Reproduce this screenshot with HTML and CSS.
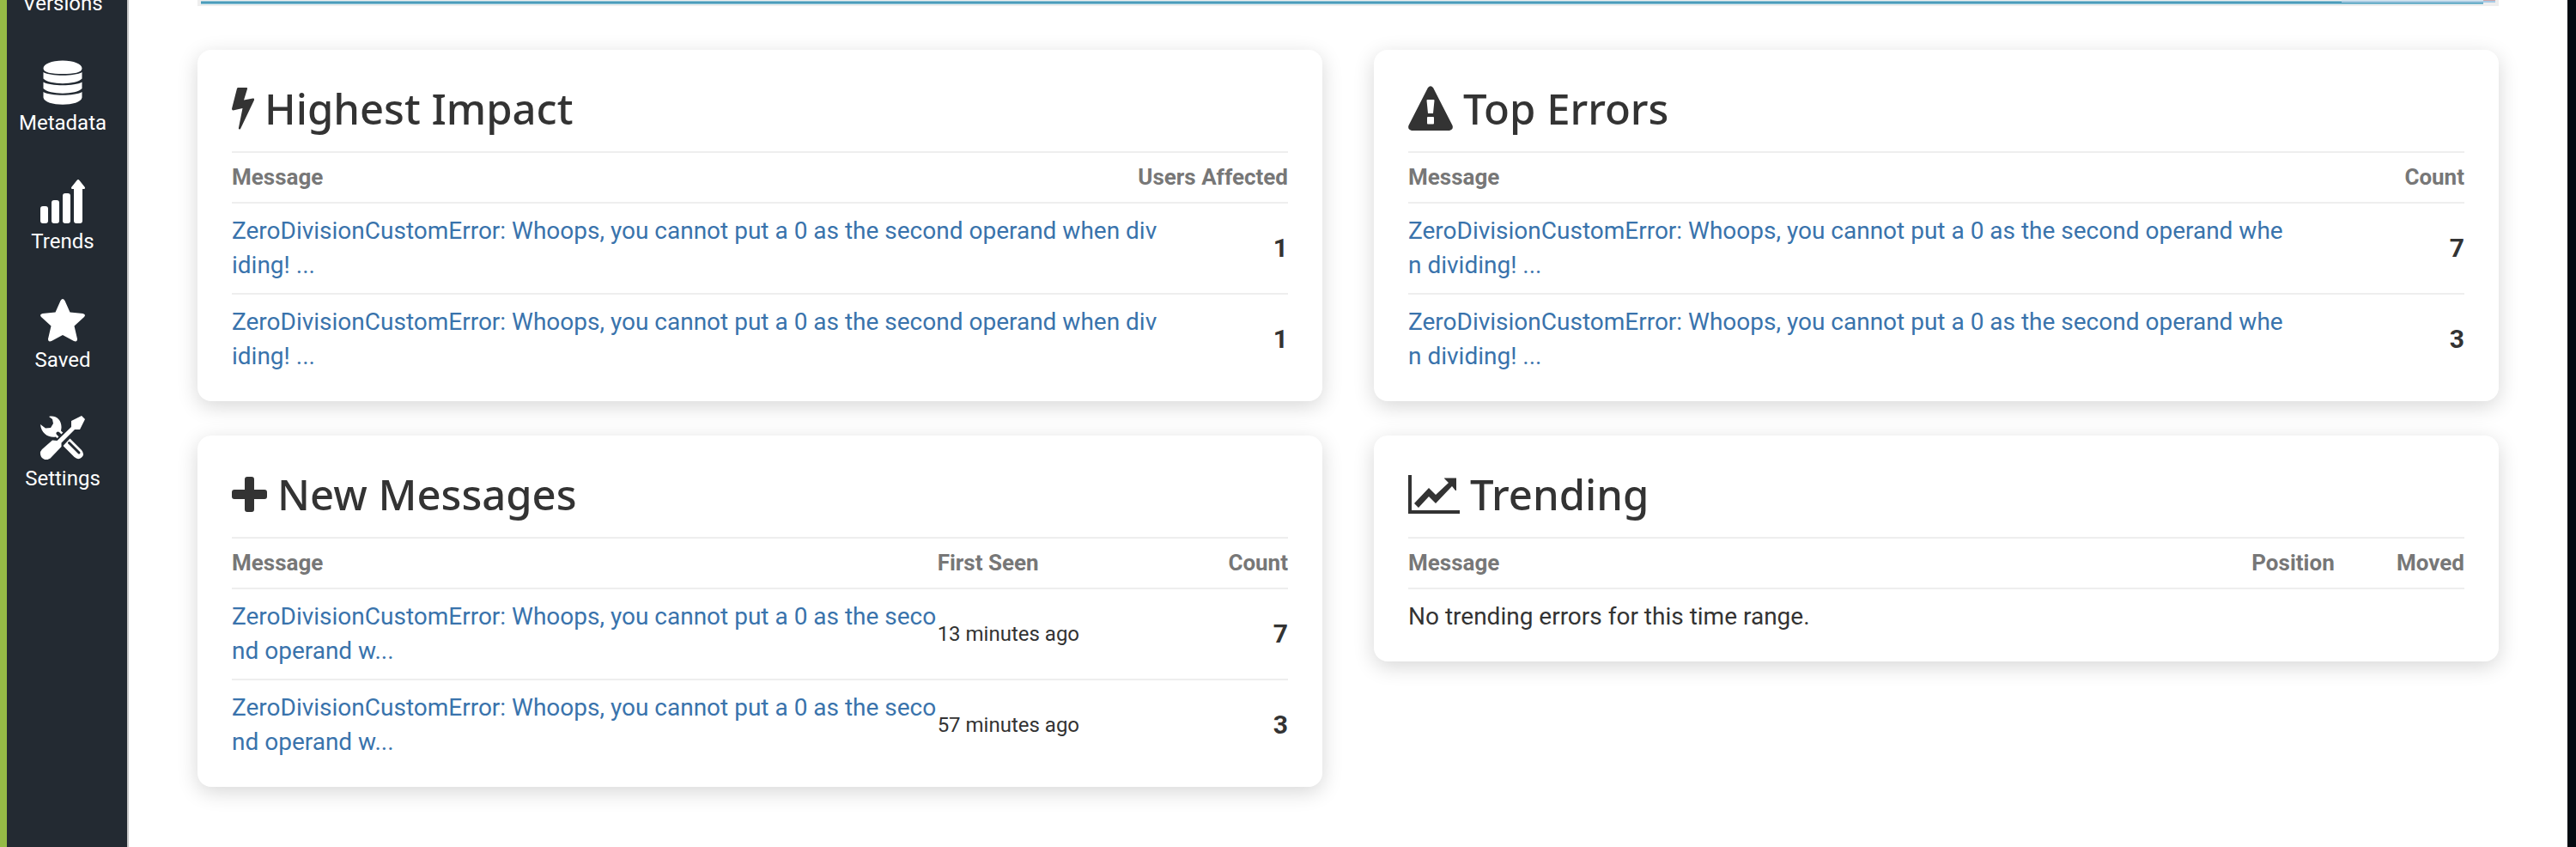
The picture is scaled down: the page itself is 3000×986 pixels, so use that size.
FILE: index.html
```html
<!DOCTYPE html>
<html lang="en">
<head>
<meta charset="utf-8">
<title>Dashboard</title>
<link rel="stylesheet" href="styles.css">
</head>
<body>
<div class="app">
  <nav class="sidebar">
    <a class="nav-item nav-item-cut" href="#">Versions</a>
    <a class="nav-item" href="#">
      <svg class="nav-icon" viewBox="0 0 52 52"><path d="M3.500 9.500C3.500 4.500 13 0.500 26 0.500S48.500 4.500 48.500 9.500 39 16 26 16 3.500 14.500 3.500 9.500ZM3.500 14C12 19 40 19 48.500 14V21.500C42 29 10 29 3.500 21.500ZM3.500 25.500C12 30.500 40 30.500 48.500 25.500V33C42 40.500 10 40.500 3.500 33ZM3.500 37C12 42 40 42 48.500 37V43.500C47 54.500 5 54.500 3.500 43.500Z"/></svg>
      Metadata</a>
    <a class="nav-item" href="#">
      <svg class="nav-icon" viewBox="0 0 52 52"><rect x="0" y="32" width="9" height="20" rx="3"/><rect x="13" y="25" width="9" height="27" rx="3"/><rect x="26" y="17" width="9" height="35" rx="3"/><path d="M39 12h-1.500Q35 12 36.500 9.500L42.500 2Q44 0 45.500 2L51.500 9.500Q53 12 50.500 12H49V49Q49 52 46 52H42Q39 52 39 49Z"/></svg>
      Trends</a>
    <a class="nav-item" href="#">
      <svg class="nav-icon" viewBox="0 -1 52 52"><path d="M23.500 3Q26 -1 28.500 3L34.500 16.500 49.500 18Q53.500 19 51 22L39.500 32.500 43 47.500Q43 51.500 39 50L26 43 13 50Q9 51.500 9 47.500L12.500 32.500 1 22Q-1.500 19 2.500 18L17.500 16.500Z"/></svg>
      Saved</a>
    <a class="nav-item" href="#">
      <svg class="nav-icon" viewBox="0 0 52 52"><path d="M10 1C17-1 25 4 24.500 14L24 17.500 29 22 22 29 18 24.500C10 26 1 21 0 10L6 14.500 12 14 15 9 14 4Z"/><path d="M34.500 26.500 48 40Q52 45 48 48.500T39.500 48L26.500 35Z"/><path class="icon-gap" d="M33.500 31.500 45 43"/><path class="icon-slot" d="M20.500 20.500 24.500 24.500"/><path class="icon-edge" d="M48 0 52 4 46 16H40L24.500 31.500V36L13 48C8 54-1 51 0 42L2 39 14 28.500 19.500 29 36 13V6Z"/></svg>
      Settings</a>
  </nav>
  <main class="main">
    <div class="chart">
      <div class="chart-band"></div>
      <div class="chart-recent"></div>
      <div class="chart-now"></div>
    </div>
    <div class="cards">
      <section class="card">
        <h2 class="title"><svg class="title-icon" style="width:26px" viewBox="0 0 26 49"><path d="M6 1Q6.300 0 7.500 0H17Q18.500 0 18 1.500L14 14.500 24.500 12.500Q27 12.500 26 14.500L10.500 47Q10 48.500 9 48.500 7.500 48.500 8 46.500L12.500 24 1.500 26.500Q0 26.500 0 24.500Z"/></svg>Highest Impact</h2>
        <table class="table">
          <colgroup><col class="col-wide"><col></colgroup>
          <thead><tr><th>Message</th><th class="num">Users Affected</th></tr></thead>
          <tbody>
            <tr><td><a class="link" href="#">ZeroDivisionCustomError: Whoops, you cannot put a 0 as the second operand when dividing! ...</a></td><td class="num count">1</td></tr>
            <tr><td><a class="link" href="#">ZeroDivisionCustomError: Whoops, you cannot put a 0 as the second operand when dividing! ...</a></td><td class="num count">1</td></tr>
          </tbody>
        </table>
      </section>
      <section class="card">
        <h2 class="title"><svg class="title-icon" style="width:52px" viewBox="0 0 52 52"><path fill-rule="evenodd" d="M23 2Q26-1.500 29 2L51.500 46Q53 51 48 52H4Q-1 51 .5 46ZM21.500 17 23 32H29L30.500 17Q30.500 16 29.500 16H22.500Q21.500 16 21.500 17ZM23 36Q22 36 22 37V43.500Q22 44.500 23 44.500H29Q30 44.500 30 43.500V37Q30 36 29 36Z"/></svg>Top Errors</h2>
        <table class="table">
          <colgroup><col class="col-medium"><col></colgroup>
          <thead><tr><th>Message</th><th class="num">Count</th></tr></thead>
          <tbody>
            <tr><td><a class="link" href="#">ZeroDivisionCustomError: Whoops, you cannot put a 0 as the second operand when dividing! ...</a></td><td class="num count">7</td></tr>
            <tr><td><a class="link" href="#">ZeroDivisionCustomError: Whoops, you cannot put a 0 as the second operand when dividing! ...</a></td><td class="num count">3</td></tr>
          </tbody>
        </table>
      </section>
      <section class="card">
        <h2 class="title"><svg class="title-icon" style="width:41px" viewBox="0 0 41 41"><path d="M15 3Q15 0 18 0H23Q26 0 26 3V15H38Q41 15 41 18V23Q41 26 38 26H26V38Q26 41 23 41H18Q15 41 15 38V26H3Q0 26 0 23V18Q0 15 3 15H15Z"/></svg>New Messages</h2>
        <table class="table">
          <colgroup><col class="col-narrow"><col><col></colgroup>
          <thead><tr><th>Message</th><th>First Seen</th><th class="num">Count</th></tr></thead>
          <tbody>
            <tr><td><a class="link" href="#">ZeroDivisionCustomError: Whoops, you cannot put a 0 as the second operand w...</a></td><td class="time">13 minutes ago</td><td class="num count">7</td></tr>
            <tr><td><a class="link" href="#">ZeroDivisionCustomError: Whoops, you cannot put a 0 as the second operand w...</a></td><td class="time">57 minutes ago</td><td class="num count">3</td></tr>
          </tbody>
        </table>
      </section>
      <section class="card">
        <h2 class="title"><svg class="title-icon" style="width:60px" viewBox="0 0 60 45"><path d="M0 0H4V41H60V45H0ZM7 33 24 15 32 23 47 9 42 4V3.500H56V18H55L51 13 32 33 24 25 12 38Z"/></svg>Trending</h2>
        <table class="table">
          <colgroup><col class="col-trend"><col><col class="col-moved"></colgroup>
          <thead><tr><th>Message</th><th class="num">Position</th><th class="num">Moved</th></tr></thead>
          <tbody><tr><td colspan="3">No trending errors for this time range.</td></tr></tbody>
        </table>
      </section>
    </div>
  </main>
  <div class="edge"></div>
</div>
</body>
</html>
```

FILE: styles.css
```css
* { box-sizing: border-box; }
body { margin: 0; font-family: Roboto, sans-serif; font-size: 28px; line-height: 40px; color: #333; background: #fff; }
.app { display: flex; min-height: 100vh; }
.sidebar { flex: none; width: 150px; padding-right: 10px; background: #232a32; border-left: 8px solid #95ba46; border-right: 2px solid #c8c8c8; }
.nav-item { display: flex; flex-direction: column; align-items: center; height: 138px; padding-top: 16px; gap: 5px; color: #fff; font-size: 24px; line-height: 32px; text-decoration: none; }
.nav-item-cut { height: 54px; padding: 0; line-height: 9px; }
.nav-icon { width: 52px; height: 52px; fill: #fff; overflow: visible; }
.icon-gap { fill: none; stroke: #232a32; stroke-width: 3; stroke-linecap: round; }
.icon-slot { fill: none; stroke: #232a32; stroke-width: 4; stroke-linecap: round; }
.icon-edge { stroke: #232a32; stroke-width: 4; stroke-linejoin: round; paint-order: stroke; }
.main { flex: 1; min-width: 0; padding: 0 80px; }
.chart { display: flex; align-items: flex-start; height: 7px; padding: 0 4px; background: #eee; }
.chart-band { flex: 1; height: 5px; background: linear-gradient(#eee 1px, #8fc3d6 1px 2px, #4c9cba 2px 4px, #8cc4d8 4px); }
.chart-recent { width: 165px; height: 5px; background: linear-gradient(#d8e6f0 1px, #a8cbe2 1px 3px, #4c9cba 3px 4px, #8cc4d8 4px); }
.chart-now { width: 14px; height: 3px; background: linear-gradient(#cba5ab 1px, #a8cbe6 1px); }
.cards { display: grid; grid-template-columns: 1fr 1fr; gap: 40px 60px; align-items: start; margin-top: 51px; }
.card { padding: 36px 40px 20px; border-radius: 16px; background: #fff; box-shadow: 0 6px 24px rgba(0, 0, 0, .16); }
.title { display: flex; align-items: center; gap: 12px; margin: 0 0 18px; height: 64px; font: 500 49px/64px "Noto Sans", sans-serif; }
.title-icon { flex: none; fill: #333; }
.table { width: 100%; table-layout: fixed; border-collapse: separate; border-spacing: 0; }
.col-wide { width: 88%; }
.col-medium { width: 83.333%; }
.col-narrow { width: 66.8%; }
.col-trend { width: 75%; }
.col-moved { width: 12.3%; }
th { padding: 8px 0 9px; border-top: 2px solid #eee; color: #777; font-size: 26px; font-weight: 700; text-align: left; }
th.num { white-space: nowrap; direction: rtl; }
td { padding: 12px 0; border-top: 2px solid #eee; word-break: break-all; }
.num { text-align: right; }
th.num { text-align: start; }
.count { font-size: 30px; font-weight: 700; }
.time { font-size: 24px; }
.link { color: #3973ac; text-decoration: none; }
.edge { flex: none; width: 10px; background: #030a10; }
```
